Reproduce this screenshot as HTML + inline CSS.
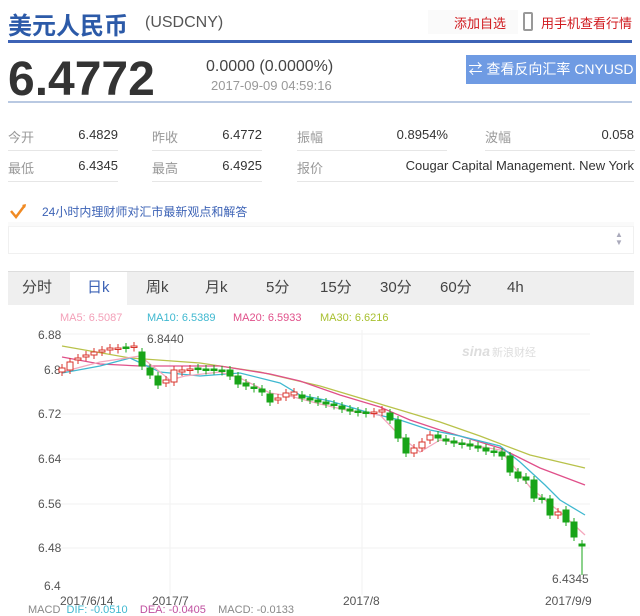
<!DOCTYPE html>
<html><head><meta charset="utf-8"><style>
*{margin:0;padding:0;box-sizing:border-box}
body{width:640px;height:608px;overflow:hidden;background:#fff;font-family:"Liberation Sans","Noto Sans CJK SC",sans-serif;position:relative;color:#333}
.a{position:absolute;white-space:nowrap}
.lbl{color:#999;font-size:13px}
.val{color:#333;font-size:13px;text-align:right}
.ul{position:absolute;height:1px;background:#e6e6e6}
.tab{position:absolute;top:278px;font-size:15px;color:#444;line-height:20px}
</style></head><body>
<div class="a" style="left:8px;top:6px;font-size:24px;font-weight:bold;color:#2c5aa8">美元人民币</div>
<div class="a" style="left:145px;top:14px;font-size:16px;color:#555">(USDCNY)</div>
<div class="a" style="left:428px;top:10px;width:90px;height:24px;background:#fafafa"></div>
<div class="a" style="left:454px;top:13px;font-size:13px;color:#d0191e">添加自选</div>
<div class="a" style="left:523px;top:12px;width:10px;height:19px;border:2px solid #999;border-radius:2px"></div>
<div class="a" style="left:541px;top:13px;font-size:13px;color:#d0191e">用手机查看行情</div>
<div class="a" style="left:8px;top:40px;width:624px;height:3px;background:#3d63b6"></div>

<div class="a" style="left:8px;top:52px;font-size:48px;font-weight:bold;color:#333">6.4772</div>
<div class="a" style="left:206px;top:58px;font-size:16px;color:#444">0.0000 (0.0000%)</div>
<div class="a" style="left:211px;top:78px;font-size:13px;color:#999">2017-09-09 04:59:16</div>
<div class="a" style="left:466px;top:55px;width:170px;height:29px;background:#6f9be3;color:#fff;font-size:14px;line-height:29px;text-align:center">⇄ 查看反向汇率 CNYUSD</div>
<div class="a" style="left:8px;top:101px;width:624px;height:2px;background:#b9c9e2"></div>

<div class="a lbl" style="left:8px;top:127px">今开</div>
<div class="a val" style="left:60px;top:127px;width:58px">6.4829</div>
<div class="a lbl" style="left:152px;top:127px">昨收</div>
<div class="a val" style="left:200px;top:127px;width:62px">6.4772</div>
<div class="a lbl" style="left:297px;top:127px">振幅</div>
<div class="a val" style="left:360px;top:127px;width:88px">0.8954%</div>
<div class="a lbl" style="left:485px;top:127px">波幅</div>
<div class="a val" style="left:560px;top:127px;width:74px">0.058</div>
<div class="ul" style="left:8px;top:150px;width:110px"></div>
<div class="ul" style="left:152px;top:150px;width:110px"></div>
<div class="ul" style="left:297px;top:150px;width:150px"></div>
<div class="ul" style="left:485px;top:150px;width:150px"></div>

<div class="a lbl" style="left:8px;top:158px">最低</div>
<div class="a val" style="left:60px;top:158px;width:58px">6.4345</div>
<div class="a lbl" style="left:152px;top:158px">最高</div>
<div class="a val" style="left:200px;top:158px;width:62px">6.4925</div>
<div class="a lbl" style="left:297px;top:158px">报价</div>
<div class="a val" style="left:360px;top:158px;width:274px">Cougar Capital Management. New York</div>
<div class="ul" style="left:8px;top:181px;width:110px"></div>
<div class="ul" style="left:152px;top:181px;width:110px"></div>
<div class="ul" style="left:297px;top:181px;width:337px"></div>

<svg class="a" style="left:10px;top:203px" width="18" height="16"><path d="M1 8 L6 14 L15 2" stroke="#f08a24" stroke-width="2.5" fill="none"/><path d="M12 2 L16 1 L15 5" fill="#f08a24"/></svg>
<div class="a" style="left:42px;top:203px;font-size:12px;color:#3d63b6">24小时内理财师对汇市最新观点和解答</div>
<div class="a" style="left:8px;top:226px;width:626px;height:28px;background:#fff;border:1px solid #f0f0f0;border-top:1px solid #f3f3f3"></div>
<div class="a" style="left:8px;top:222px;width:626px;height:4px;background:#fafafa"></div>
<div class="a" style="left:615px;top:231px;font-size:8px;color:#aab;line-height:8px">▲<br>▼</div>

<div class="a" style="left:8px;top:271px;width:626px;height:34px;background:#efefef;border-top:1px solid #ddd"></div>
<div class="a" style="left:70px;top:272px;width:57px;height:33px;background:#fff"></div>
<div class="tab" style="left:22px">分时</div>
<div class="tab" style="left:87px;color:#3d63b6">日k</div>
<div class="tab" style="left:146px">周k</div>
<div class="tab" style="left:205px">月k</div>
<div class="tab" style="left:266px">5分</div>
<div class="tab" style="left:320px">15分</div>
<div class="tab" style="left:380px">30分</div>
<div class="tab" style="left:440px">60分</div>
<div class="tab" style="left:507px">4h</div>

<div class="a" style="left:60px;top:312px;font-size:11px;color:#f3a0b8">MA5: 6.5087</div>
<div class="a" style="left:147px;top:312px;font-size:11px;color:#3fb8d0">MA10: 6.5389</div>
<div class="a" style="left:233px;top:312px;font-size:11px;color:#e0508a">MA20: 6.5933</div>
<div class="a" style="left:320px;top:312px;font-size:11px;color:#a8c030">MA30: 6.6216</div>

<svg class="a" style="left:0;top:326px" width="640" height="282" viewBox="0 326 640 282">
<g stroke="#f2f2f2" stroke-width="1">
<line x1="60" y1="334" x2="590" y2="334"/><line x1="60" y1="370" x2="590" y2="370"/><line x1="60" y1="414" x2="590" y2="414"/><line x1="60" y1="459" x2="590" y2="459"/><line x1="60" y1="504" x2="590" y2="504"/><line x1="60" y1="548" x2="590" y2="548"/>
<line x1="170" y1="330" x2="170" y2="595"/><line x1="362" y1="330" x2="362" y2="595"/>
</g>
<g font-size="12" fill="#555" font-family="Liberation Sans,sans-serif">
<text x="38" y="339">6.88</text><text x="44" y="374">6.8</text><text x="38" y="418">6.72</text><text x="38" y="463">6.64</text><text x="38" y="508">6.56</text><text x="38" y="552">6.48</text><text x="44" y="590">6.4</text>
<text x="147" y="343">6.8440</text><text x="552" y="583">6.4345</text>
<text x="60" y="605">2017/6/14</text><text x="152" y="605">2017/7</text><text x="343" y="605">2017/8</text><text x="545" y="605">2017/9/9</text>
</g>
<text x="462" y="356" font-size="14" fill="#ddd" font-style="italic" font-weight="bold">sina</text><text x="492" y="356" font-size="11" fill="#ddd">新浪财经</text>
<polyline fill="none" stroke="#b8c24a" stroke-width="1.3" points="62,346 130,358 200,363 260,372 320,386 360,398 400,410 440,422 480,436 530,455 585,468"/>
<polyline fill="none" stroke="#e0508a" stroke-width="1.3" points="62,357 100,364 140,366 220,366 270,374 300,381 340,395 380,407 410,420 440,430 500,448 540,468 585,485"/>
<polyline fill="none" stroke="#3fb8d0" stroke-width="1.3" points="62,373 100,366 130,358 160,372 200,376 240,373 280,383 300,395 330,401 370,413 400,420 430,430 460,436 500,446 520,462 545,485 560,500 585,515"/>
<polyline fill="none" stroke="#f4a8bd" stroke-width="1.3" points="62,372 100,362 140,356 170,380 185,376 220,372 240,378 270,393 290,396 320,404 350,411 380,415 400,436 420,452 440,440 460,443 500,450 515,468 530,487 545,500 560,512 585,535"/>
<g id="c"></g>
</svg>
<div class="a" style="left:28px;top:604px;font-size:11px;color:#888">MACD &nbsp;<span style="color:#3fb8d0">DIF: -0.0510</span> &nbsp; &nbsp;<span style="color:#c050a0">DEA: -0.0405</span> &nbsp; &nbsp;MACD: -0.0133</div>
<script>
var p=[[62,372,368],[70,370,362],[78,360,358],[86,357,355],[94,355,352],[102,352,350],[110,350,348],[118,349,348],[126,347,347],[134,347,346],[142,352,366],[150,368,375],[158,376,385],[166,383,380],[174,382,370],[182,372,370],[190,370,369],[198,368,369],[206,369,369],[214,369,370],[222,370,371],[230,370,376],[238,376,384],[246,383,386],[254,387,388],[262,389,392],[270,394,402],[278,400,398],[286,397,393],[294,395,392],[302,395,398],[310,398,400],[318,400,402],[326,402,404],[334,404,405],[342,406,409],[350,409,411],[358,411,412],[366,412,413],[374,413,412],[382,412,410],[390,413,420],[398,420,438],[406,438,453],[414,453,448],[422,448,442],[430,440,435],[438,435,438],[446,439,441],[454,441,443],[462,443,444],[470,444,446],[478,446,448],[486,448,451],[494,451,452],[502,452,456],[510,456,472],[518,472,478],[526,477,480],[534,480,498],[542,498,499],[550,499,515],[558,515,512],[566,510,522],[574,522,537],[582,544,546]];
var s='';p.forEach(function(c){var up=c[2]<c[1];var col=up?'#d8352c':'#18a418';var t=Math.min(c[1],c[2]),h=Math.max(Math.abs(c[2]-c[1]),1.5);
s+='<line x1="'+c[0]+'" x2="'+c[0]+'" y1="'+(t-4)+'" y2="'+(t+h+4)+'" stroke="'+col+'"/>';
s+='<rect x="'+(c[0]-3)+'" y="'+t+'" width="6" height="'+h+'" fill="'+(up?'#fff':col)+'" stroke="'+col+'"/>';});
s+='<line x1="582" x2="582" y1="548" y2="575" stroke="#18a418"/>';
document.getElementById('c').innerHTML=s;
</script>
</body></html>
